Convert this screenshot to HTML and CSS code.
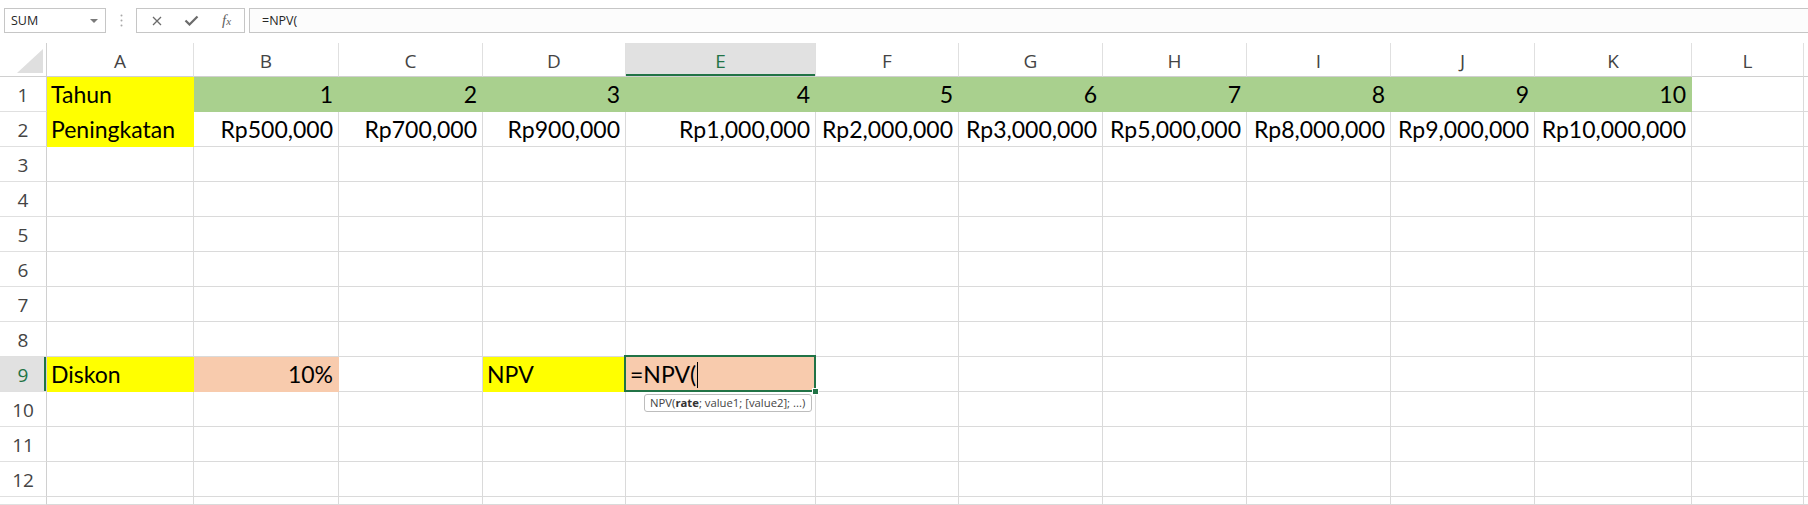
FILE: index.html
```html
<!DOCTYPE html>
<html lang="en">
<head>
<meta charset="UTF-8" />
<meta name="viewport" content="width=device-width, initial-scale=1" />
<title>NPV - Excel</title>
<link rel="stylesheet" href="styles.css">
</head>
<body>

<header class="formulaBar">
  <div class="nameBox">
    <span>SUM</span>
    <span class="nameArrow"></span>
  </div>
  <div class="barDots">
    <svg width="3" height="13" viewBox="0 0 3 13"><circle cx="1.5" cy="1.5" r="1" fill="#a8a8a8"/><circle cx="1.5" cy="6.5" r="1" fill="#a8a8a8"/><circle cx="1.5" cy="11.5" r="1" fill="#a8a8a8"/></svg>
  </div>
  <div class="barButtons">
    <span class="barBtn">
      <svg width="10" height="10" viewBox="0 0 10 10"><path d="M1 1 L9 9 M9 1 L1 9" stroke="#6b6b6b" stroke-width="1.3" fill="none"/></svg>
    </span>
    <span class="barBtn">
      <svg width="15" height="11" viewBox="0 0 15 11"><path d="M1.5 5.5 L5.5 9.5 L13.5 1.5" stroke="#6b6b6b" stroke-width="2.2" fill="none"/></svg>
    </span>
    <span class="barBtn fx">f<span class="fxSub">x</span></span>
  </div>
  <div class="formulaInput">=NPV(</div>
</header>

<main class="sheet" id="sheet">
  <div class="corner">
    <svg width="26" height="24" viewBox="0 0 26 24"><polygon points="26,0 26,24 0,24" fill="#dfdfdf"/></svg>
  </div>
</main>

<script>
  const sheet = document.getElementById("sheet");
  const columns = ["A", "B", "C", "D", "E", "F", "G", "H", "I", "J", "K", "L"];
  const amounts = ["Rp500,000", "Rp700,000", "Rp900,000", "Rp1,000,000", "Rp2,000,000",
                   "Rp3,000,000", "Rp5,000,000", "Rp8,000,000", "Rp9,000,000", "Rp10,000,000"];

  // cell contents, keyed by address
  const cells = {
    A1: { text: "Tahun", fill: "yellow" },
    A2: { text: "Peningkatan", fill: "yellow" },
    A9: { text: "Diskon", fill: "yellow" },
    B9: { text: "10%", fill: "peach", num: true },
    D9: { text: "NPV", fill: "yellow" }
  };
  columns.slice(1, 11).forEach((col, i) => {
    cells[col + "1"] = { text: String(i + 1), fill: "green", num: true };
    cells[col + "2"] = { text: amounts[i], num: true };
  });

  const activeCol = "E";
  const activeRow = 9;
  const lastRow = 12;

  function addDiv(className, text) {
    const el = document.createElement("div");
    el.className = className;
    if (text !== undefined) el.textContent = text;
    sheet.appendChild(el);
    return el;
  }

  // column headers (+ the sliver of the next column at the window edge)
  columns.forEach((col) => {
    addDiv("colHead" + (col === activeCol ? " selected" : ""), col);
  });
  addDiv("colHead");

  // rows, the last one only peeks in under the window edge
  for (let r = 1; r <= lastRow + 1; r++) {
    const partial = r > lastRow;
    addDiv("rowHead" + (r === activeRow ? " selected" : ""), partial ? undefined : r);

    columns.forEach((col) => {
      const cell = addDiv("cell");
      const data = cells[col + r];
      if (data) {
        cell.textContent = data.text;
        if (data.fill) cell.classList.add("fill-" + data.fill);
        if (data.num) cell.classList.add("num");
      }
      if (col === activeCol && r === activeRow) {
        cell.classList.add("fill-peach", "active");
        cell.innerHTML = '=NPV(<span class="caret"></span>' +
          '<span class="fillHandle"></span>' +
          '<div class="argTip">NPV(<b>rate</b>; value1; [value2]; ...)</div>';
      }
    });
    addDiv("cell");
  }
</script>

</body>
</html>
```

FILE: styles.css
```css
body {
  margin: 0;
  background: #fff;
  font-family: "Open Sans", "Noto Sans", sans-serif;
  overflow: hidden;
  height: 505px;
}

/* formula bar */
.formulaBar {
  display: flex;
  align-items: center;
  height: 43px;
  padding: 8px 0 10px 4px;
  box-sizing: border-box;
}

.nameBox {
  width: 102px;
  height: 25px;
  box-sizing: border-box;
  border: 1px solid #c6c6c6;
  background: #fff;
  display: flex;
  align-items: center;
  justify-content: space-between;
  padding: 0 7px 0 6px;
  font-size: 12.5px;
  color: #262626;
}

.nameArrow {
  width: 0;
  height: 0;
  border-left: 4px solid transparent;
  border-right: 4px solid transparent;
  border-top: 4px solid #7a7a7a;
}

.barDots {
  width: 30px;
  display: flex;
  justify-content: center;
}

.barButtons {
  width: 109px;
  height: 25px;
  box-sizing: border-box;
  border: 1px solid #c6c6c6;
  background: #fff;
  display: grid;
  grid-template-columns: repeat(3, 35px);
  padding-left: 2px;
  align-items: center;
}

.barBtn {
  display: flex;
  justify-content: center;
  align-items: center;
}

.fx {
  font-family: "Liberation Serif", serif;
  font-style: italic;
  font-size: 15px;
  color: #5f5f5f;
  line-height: 1;
}

.fxSub {
  font-size: 11px;
  position: relative;
  top: 1px;
}

.formulaInput {
  flex: 1;
  margin-left: 4px;
  height: 25px;
  box-sizing: border-box;
  border: 1px solid #c6c6c6;
  border-right: none;
  background: #fcfcfc;
  padding-left: 12px;
  font-size: 12.5px;
  line-height: 23px;
  color: #262626;
}

/* grid */
.sheet {
  display: grid;
  grid-template-columns: 47px 147px 145px 144px 143px 190px 143px 144px 144px 144px 144px 157px 112px 1fr;
  grid-template-rows: 34px repeat(12, 35px) 8px;
  overflow: hidden;
}

.corner {
  display: flex;
  justify-content: flex-end;
  align-items: flex-end;
  padding: 0 3px 3px 0;
  border-right: 1px solid #d0d0d0;
  border-bottom: 1px solid #d0d0d0;
}

.colHead {
  text-align: center;
  font-size: 19px;
  line-height: 33px;
  padding-top: 2px;
  box-sizing: border-box;
  color: #444;
  border-right: 1px solid #e0e0e0;
  border-bottom: 1px solid #d0d0d0;
}

.rowHead {
  text-align: center;
  font-size: 19px;
  line-height: 34px;
  padding-top: 1px;
  box-sizing: border-box;
  color: #444;
  border-right: 1px solid #d0d0d0;
  border-bottom: 1px solid #e0e0e0;
}

.colHead.selected {
  background: #e1e1e1;
  color: #217346;
  box-shadow: inset 0 -2px #217346;
}

.rowHead.selected {
  background: #e1e1e1;
  color: #217346;
  box-shadow: inset -2px 0 #217346;
}

.cell {
  font-family: "Lato", "Open Sans", sans-serif;
  font-size: 23px;
  line-height: 34px;
  color: #000;
  padding: 0 5px 0 4px;
  white-space: nowrap;
  box-sizing: border-box;
  border-right: 1px solid #dadada;
  border-bottom: 1px solid #dadada;
}

.num {
  text-align: right;
}

.fill-yellow {
  background: #ffff00;
  border-color: #ffff00;
}

.fill-green {
  background: #a9d08e;
  border-color: #a9d08e;
}

.fill-peach {
  background: #f8cbad;
  border-color: #f8cbad;
}

/* active cell in edit mode */
.active {
  position: relative;
}

.active::after {
  content: "";
  position: absolute;
  top: -2px;
  left: -2px;
  right: -1px;
  bottom: -1px;
  border: 2px solid #217346;
  pointer-events: none;
}

.caret {
  display: inline-block;
  width: 1px;
  height: 26px;
  background: #000;
  vertical-align: -5px;
  margin-left: 1px;
}

.fillHandle {
  position: absolute;
  right: -4px;
  bottom: -4px;
  width: 5px;
  height: 5px;
  background: #217346;
  border: 1px solid #fff;
  z-index: 2;
}

.argTip {
  position: absolute;
  top: 37px;
  left: 18px;
  height: 18px;
  box-sizing: border-box;
  padding: 0 6px 0 5px;
  background: #fff;
  border: 1px solid #bdbdbd;
  border-radius: 3px;
  font-family: "Open Sans", sans-serif;
  font-size: 11.3px;
  line-height: 16px;
  color: #444;
  white-space: nowrap;
  z-index: 3;
}

.argTip b {
  font-weight: 700;
  color: #333;
}
```
